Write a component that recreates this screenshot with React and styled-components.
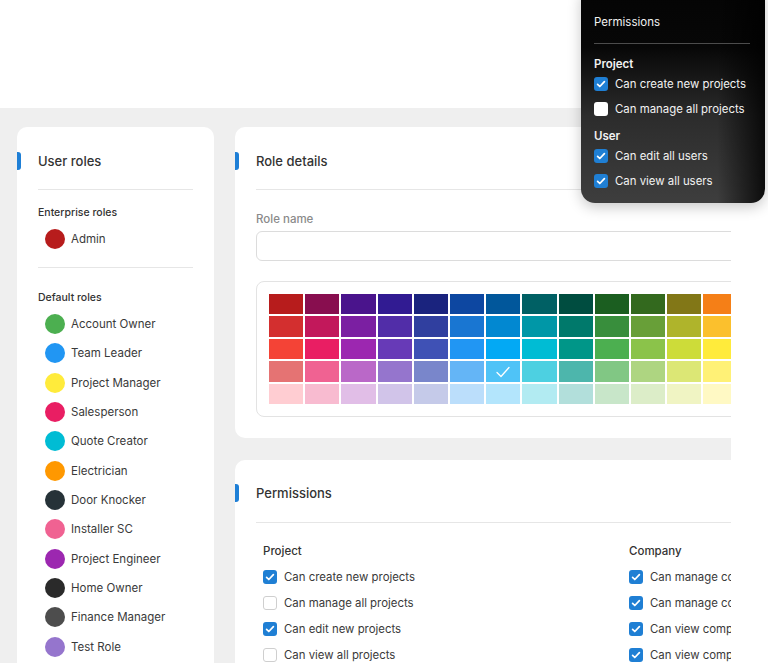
import React from 'react';
import styled, { createGlobalStyle } from 'styled-components';

const GlobalStyle = createGlobalStyle`
  html, body {
    margin: 0;
    padding: 0;
    background: #ffffff;
    font-family: Inter, "Noto Sans", "Liberation Sans", sans-serif;
    color: #333;
  }
  * { box-sizing: border-box; }
`;

const ROLE_GROUPS = [
  {
    label: 'Enterprise roles',
    roles: [{ name: 'Admin', color: '#b71c1c' }],
  },
  {
    label: 'Default roles',
    roles: [
      { name: 'Account Owner', color: '#4caf50' },
      { name: 'Team Leader', color: '#2196f3' },
      { name: 'Project Manager', color: '#ffeb3b' },
      { name: 'Salesperson', color: '#e91e63' },
      { name: 'Quote Creator', color: '#00bcd4' },
      { name: 'Electrician', color: '#ff9800' },
      { name: 'Door Knocker', color: '#263238' },
      { name: 'Installer SC', color: '#f06292' },
      { name: 'Project Engineer', color: '#9c27b0' },
      { name: 'Home Owner', color: '#2a2a2a' },
      { name: 'Finance Manager', color: '#4d4d4d' },
      { name: 'Test Role', color: '#9575cd' },
    ],
  },
];

// material palette, rows 900 / 700 / 500 / 300 / 100
const SWATCHES = [
  ['#b71c1c', '#880e4f', '#4a148c', '#311b92', '#1a237e', '#0d47a1', '#01579b', '#006064', '#004d40', '#1b5e20', '#33691e', '#827717', '#f57f17'],
  ['#d32f2f', '#c2185b', '#7b1fa2', '#512da8', '#303f9f', '#1976d2', '#0288d1', '#0097a7', '#00796b', '#388e3c', '#689f38', '#afb42b', '#fbc02d'],
  ['#f44336', '#e91e63', '#9c27b0', '#673ab7', '#3f51b5', '#2196f3', '#03a9f4', '#00bcd4', '#009688', '#4caf50', '#8bc34a', '#cddc39', '#ffeb3b'],
  ['#e57373', '#f06292', '#ba68c8', '#9575cd', '#7986cb', '#64b5f6', '#4fc3f7', '#4dd0e1', '#4db6ac', '#81c784', '#aed581', '#dce775', '#fff176'],
  ['#ffcdd2', '#f8bbd0', '#e1bee7', '#d1c4e9', '#c5cae9', '#bbdefb', '#b3e5fc', '#b2ebf2', '#b2dfdb', '#c8e6c9', '#dcedc8', '#f0f4c3', '#fff9c4'],
];
const SELECTED = '3-6';

const PERMISSIONS = [
  {
    title: 'Project',
    items: [
      ['Can create new projects', true],
      ['Can manage all projects', false],
      ['Can edit new projects', true],
      ['Can view all projects', false],
    ],
  },
  {
    title: 'Company',
    items: [
      ['Can manage company settings', true],
      ['Can manage company users', true],
      ['Can view company settings', true],
      ['Can view company users', true],
    ],
  },
];

const POPUP = [
  {
    title: 'Project',
    items: [
      ['Can create new projects', true],
      ['Can manage all projects', false],
    ],
  },
  {
    title: 'User',
    items: [
      ['Can edit all users', true],
      ['Can view all users', true],
    ],
  },
];

const Check = ({ on, $dark }) => (
  <Box $on={on} $dark={$dark}>
    {on && (
      <svg width="14" height="14" viewBox="0 0 14 14">
        <path d="M3.6 7.3l2.2 2.2 4.6-4.9" fill="none" stroke="#fff" strokeWidth="1.7" strokeLinecap="round" strokeLinejoin="round" />
      </svg>
    )}
  </Box>
);

const App = () => {
  return (
    <Page>
      <GlobalStyle />
      <TopArea />
      <Frame>
        <Columns>
          <Sidebar>
            <CardHeader>
              <Accent />
              <Title>User roles</Title>
            </CardHeader>
            {ROLE_GROUPS.map((g, i) => (
              <RoleGroup key={g.label} $first={i === 0}>
                <GroupLabel>{g.label}</GroupLabel>
                {g.roles.map((r) => (
                  <RoleRow key={r.name}>
                    <Dot style={{ background: r.color }} />
                    <span>{r.name}</span>
                  </RoleRow>
                ))}
              </RoleGroup>
            ))}
          </Sidebar>

          <Main>
            <Card>
              <CardHeader>
                <Accent />
                <Title>Role details</Title>
              </CardHeader>
              <Body>
                <FieldLabel>Role name</FieldLabel>
                <Input />
                <Palette>
                  {SWATCHES.map((row, ri) =>
                    row.map((c, ci) => (
                      <Swatch key={`${ri}-${ci}`} style={{ background: c }}>
                        {`${ri}-${ci}` === SELECTED && (
                          <svg width="16" height="12" viewBox="0 0 16 12">
                            <path d="M2 6.5l4 4 8-9" fill="none" stroke="#fff" strokeWidth="1.3" strokeLinecap="round" strokeLinejoin="round" />
                          </svg>
                        )}
                      </Swatch>
                    ))
                  )}
                </Palette>
              </Body>
            </Card>

            <Card>
              <CardHeader $top="24px" $bottom="20px">
                <Accent $top="24px" />
                <Title>Permissions</Title>
              </CardHeader>
              <PermGrid>
                {PERMISSIONS.map((col) => (
                  <PermColumn key={col.title}>
                    <PermTitle>{col.title}</PermTitle>
                    {col.items.map(([label, on]) => (
                      <PermRow key={label}>
                        <Check on={on} />
                        <span>{label}</span>
                      </PermRow>
                    ))}
                  </PermColumn>
                ))}
              </PermGrid>
            </Card>
          </Main>
        </Columns>
      </Frame>

      <Popup>
        <PopupHead>Permissions</PopupHead>
        {POPUP.map((g) => (
          <PopupGroup key={g.title}>
            <PopupTitle>{g.title}</PopupTitle>
            {g.items.map(([label, on]) => (
              <PopupRow key={label}>
                <Check on={on} $dark />
                <span>{label}</span>
              </PopupRow>
            ))}
          </PopupGroup>
        ))}
      </Popup>
    </Page>
  );
};

export default App;

const Page = styled.div`
  position: relative;
  width: 768px;
  height: 663px;
  overflow: hidden;
  background: #fff;
`;

const TopArea = styled.div`
  height: 108px;
`;

const Frame = styled.div`
  width: 731px;
  height: 555px;
  background: #efefef;
  overflow: hidden;
`;

const Columns = styled.div`
  display: flex;
  gap: 21px;
  padding: 19px 0 0 17px;
`;

const Sidebar = styled.div`
  flex: none;
  width: 197px;
  height: 560px;
  background: #fff;
  border-radius: 10px;
`;

const Main = styled.div`
  flex: none;
  width: 560px;
  display: flex;
  flex-direction: column;
  gap: 22px;
`;

const Card = styled.div`
  background: #fff;
  border-radius: 10px;
  padding-bottom: 21px;
  min-height: 220px;
`;

const CardHeader = styled.div`
  position: relative;
  margin: 0 21px;
  padding: ${({ $top }) => $top || '25px'} 0 ${({ $bottom }) => $bottom || '19px'};
  border-bottom: 1px solid #e6e6e6;
`;

const Accent = styled.div`
  position: absolute;
  left: -21px;
  top: ${({ $top }) => $top || '25px'};
  width: 4px;
  height: 18px;
  background: #1e7fd6;
  border-radius: 0 3px 3px 0;
`;

const Title = styled.div`
  font-size: 13px;
  line-height: 18px;
  font-weight: 500;
  color: #333;
`;

const RoleGroup = styled.div`
  margin: 0 21px;
  padding: ${({ $first }) => ($first ? '16px 0 14px' : '23px 0 0')};
  border-bottom: ${({ $first }) => ($first ? '1px solid #e6e6e6' : 'none')};
`;

const GroupLabel = styled.div`
  font-size: 10.5px;
  line-height: 14px;
  font-weight: 500;
  color: #333;
  margin-bottom: 4px;
`;

const RoleRow = styled.div`
  display: flex;
  align-items: center;
  gap: 6px;
  height: 29.35px;
  padding-left: 7px;
  font-size: 11.5px;
  color: #3a3a3a;
`;

const Dot = styled.div`
  width: 20px;
  height: 20px;
  border-radius: 50%;
  flex: none;
`;

const Body = styled.div`
  padding: 21px 0 0 21px;
`;

const FieldLabel = styled.div`
  font-size: 11.5px;
  line-height: 16px;
  font-weight: 500;
  color: #8a8a8a;
`;

const Input = styled.div`
  margin-top: 4px;
  height: 30px;
  border: 1px solid #dcdcdc;
  border-radius: 6px;
`;

const Palette = styled.div`
  margin-top: 20px;
  display: grid;
  grid-template-columns: repeat(13, 34.2px);
  grid-auto-rows: 20.3px;
  gap: 2.2px 2px;
  padding: 12px;
  border: 1px solid #e3e3e3;
  border-radius: 8px;
`;

const Swatch = styled.div`
  display: flex;
  align-items: center;
  justify-content: center;
`;

const PermGrid = styled.div`
  display: grid;
  grid-template-columns: 366px auto;
  padding: 20px 0 0 28px;
`;

const PermColumn = styled.div`
  display: flex;
  flex-direction: column;
`;

const PermTitle = styled.div`
  font-size: 11.5px;
  line-height: 16px;
  font-weight: 500;
  color: #333;
  margin-bottom: 5px;
`;

const PermRow = styled.div`
  display: flex;
  align-items: center;
  gap: 7px;
  height: 26px;
  font-size: 11.4px;
  color: #3a3a3a;
  white-space: nowrap;
`;

const Box = styled.div`
  flex: none;
  width: 14px;
  height: 14px;
  border-radius: 3px;
  background: ${({ $on }) => ($on ? '#1f7fd4' : '#fff')};
  border: ${({ $on, $dark }) => ($on || $dark ? 'none' : '1px solid #cfcfcf')};
  display: flex;
`;

const Popup = styled.div`
  position: absolute;
  left: 581px;
  top: -14px;
  width: 184px;
  height: 217px;
  padding: 28px 15px 0 13px;
  border-radius: 14px;
  color: #f2f2f2;
  background:
    linear-gradient(to right, rgba(0, 0, 0, 0) 74%, rgba(0, 0, 0, 0.8) 100%),
    linear-gradient(to bottom, #040404 0%, #070707 28%, #2c2c2c 60%, #3e3e3e 100%);
  box-shadow: 0 4px 14px rgba(0, 0, 0, 0.22);
`;

const PopupHead = styled.div`
  font-size: 11.5px;
  line-height: 16px;
  padding-bottom: 13px;
  border-bottom: 1.5px solid #4c4c4c;
`;

const PopupGroup = styled.div`
  padding-top: 13px;
  & + & {
    padding-top: 8px;
  }
`;

const PopupTitle = styled.div`
  font-size: 11.5px;
  line-height: 15px;
  font-weight: 600;
`;

const PopupRow = styled.div`
  display: flex;
  align-items: center;
  gap: 7px;
  height: 24.5px;
  font-size: 11.4px;
  white-space: nowrap;
`;
